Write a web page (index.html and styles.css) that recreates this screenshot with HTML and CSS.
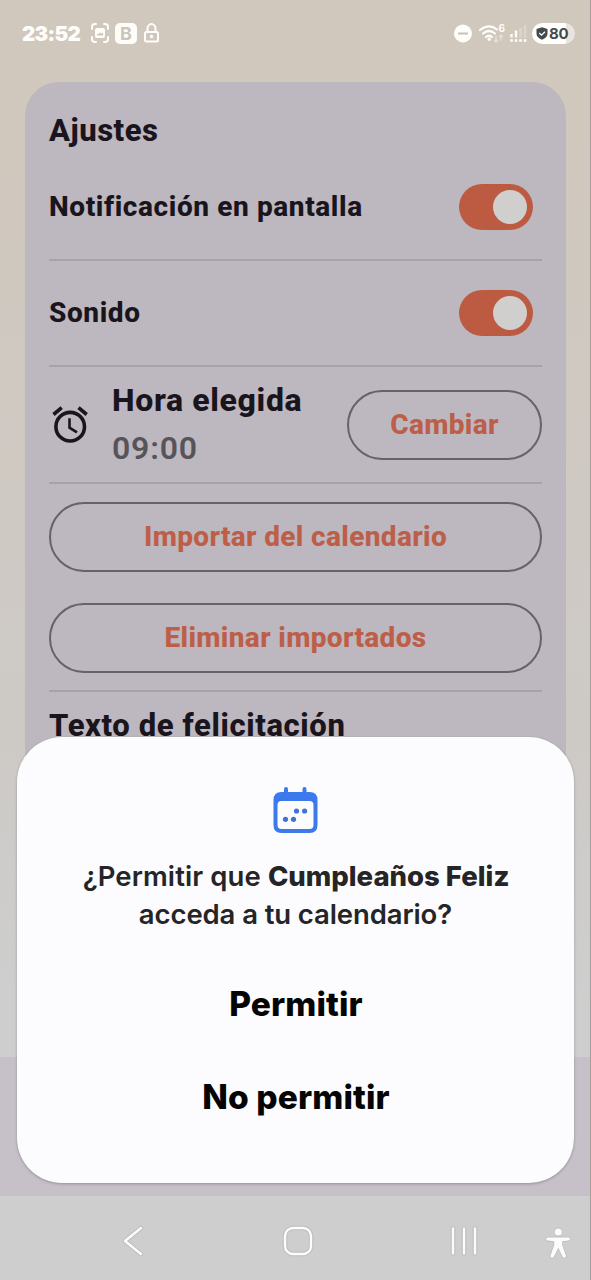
FILE: index.html
```html
<!DOCTYPE html>
<html lang="es">
<head>
<meta charset="utf-8">
<title>Ajustes</title>
<link rel="stylesheet" href="styles.css">
</head>
<body>
<div class="screen">
  <header class="status">
    <span class="clock">23:52</span>
    <svg class="status-left" width="72" height="26" viewBox="0 0 72 26">
      <g fill="none" stroke="#fffdfa" stroke-width="2" stroke-linecap="round">
        <path d="M2 9V7q0-3 3-3h1M14 4h1q3 0 3 3v2M18 17v2q0 3-3 3h-1M6 22H5q-3 0-3-3v-2"/>
        <path d="M57.500 12V8.500a4 4.500 0 0 1 8 0V12"/>
        <rect x="55" y="12" width="13" height="9.500" rx="1.500"/>
      </g>
      <path fill="#fffdfa" fill-rule="evenodd" d="M7 8h6q2 0 2 2v6q0 2-2 2H7q-2 0-2-2v-6q0-2 2-2zM7 15.500h6v-3l-2 1-1-1-1.500 1.500-1.500 0z"/>
      <rect x="25" y="3" width="22" height="21" rx="5" fill="#fffdfa"/>
      <text class="badge-letter" x="36" y="20" text-anchor="middle">B</text>
      <circle cx="61.500" cy="16.500" r="1.700" fill="#fffdfa"/>
    </svg>
    <svg class="status-right" width="76" height="26" viewBox="0 0 76 26">
      <circle cx="9" cy="13.500" r="9" fill="#fffdfa"/>
      <path d="M4 13.500h10" stroke="#c9c1b6" stroke-width="2"/>
      <g fill="none" stroke="#fffdfa" stroke-width="2.200" stroke-linecap="round">
        <path d="M26 10q9-7 17-.5M29 13.500q6-5 12 0M32 17q3.200-2.500 6 0"/>
      </g>
      <circle cx="35.200" cy="19.300" r="1.700" fill="#fffdfa"/>
      <text class="wifi-six" x="44.500" y="11.500">6</text>
      <path d="M42 16v6m-2-2 2 2 2-2M47 21v-6m-2 2 2-2 2 2" stroke="#e6e0d8" stroke-width="1.300" fill="none"/>
      <path d="M57.500 14v3.500M62 10.500v7" stroke="#fffdfa" stroke-width="2.400"/>
      <path d="M66.500 8v9.500M71 5v12.500" stroke="#dcd5cb" stroke-width="2.400"/>
      <path d="M56.300 20.500h2.600M60.700 20.500h2.600M65.200 20.500h2.600M69.700 20.500h2.600" stroke="#fffdfa" stroke-width="2.600"/>
    </svg>
    <span class="battery">
      <svg width="12" height="13" viewBox="0 0 12 13"><path d="M6 .3 11.500 2v4.500q0 4-5.500 6.200Q.5 10.500.5 6.500V2z" fill="#444b4e"/><path d="m3.300 6 2.200 2.200L9 4.800" fill="none" stroke="#fff" stroke-width="1.300"/></svg>
      <span>80</span>
    </span>
  </header>

  <main class="card">
    <h1 class="title">Ajustes</h1>
    <div class="row row-first"><span class="label notif">Notificación en pantalla</span><span class="toggle"></span></div>
    <div class="row row-second"><span class="label sound">Sonido</span><span class="toggle"></span></div>
    <div class="row row-time">
      <svg class="alarm" width="36" height="38" viewBox="0 0 36 38" fill="none" stroke="#1a151c">
        <circle cx="18.200" cy="20.700" r="14.300" stroke-width="3.600"/>
        <path d="M1.500 8.500 9.700 1.700M26.500 1.700l8.200 6.800" stroke-width="3.600"/>
        <path d="M17.500 12.200v9.500l7.500 4.600" stroke-width="2.600"/>
      </svg>
      <div class="time"><span class="time-label">Hora elegida</span><span class="time-value">09:00</span></div>
      <button class="pill change">Cambiar</button>
    </div>
    <div class="actions">
      <button class="pill import">Importar del calendario</button>
      <button class="pill delete">Eliminar importados</button>
    </div>
    <h2 class="subtitle">Texto de felicitación</h2>
  </main>
  <div class="bottom-strip"></div>

  <nav class="nav">
    <svg width="591" height="84" viewBox="0 0 591 84">
      <g class="nav-halo">
        <path d="M141 32 125 45l16 13"/>
        <rect x="285" y="32" width="26" height="26" rx="8"/>
        <path d="M453 32.500v25M464 32.500v25M475 32.500v25"/>
      </g>
      <g class="nav-lines">
        <path d="M141 32 125 45l16 13"/>
        <rect x="285" y="32" width="26" height="26" rx="8"/>
        <path d="M453 32.500v25M464 32.500v25M475 32.500v25"/>
      </g>
      <g class="person">
        <circle cx="558.300" cy="36" r="3.600"/>
        <path d="M548 41.500h20.500q1.700 0 1.700 1.500t-1.700 1.600l-6.300.6v4l3.800 10.500q.3 1.600-1.200 2.100-1.500.3-2.200-1.100l-4.300-9-4.500 9q-.7 1.400-2.200 1.100-1.500-.5-1.200-2.100l3.800-10.500v-4l-6.400-.6q-1.700-.1-1.700-1.600T548 41.500z"/>
      </g>
    </svg>
  </nav>

  <section class="dialog">
    <svg class="calendar" width="46" height="48" viewBox="0 0 46 48">
      <path d="M13 3v7M31.500 3v7" stroke="#3b79ec" stroke-width="4" stroke-linecap="round"/>
      <path fill="#3b79ec" fill-rule="evenodd" d="M8.500 6h28q8 0 8 8v25q0 8-8 8h-28q-8 0-8-8V14q0-8 8-8zM8.500 15q-4 0-4 4v20q0 4 4 4h28q4 0 4-4V19q0-4-4-4z"/>
      <g fill="#3d74d8"><circle cx="12.500" cy="33.300" r="2.600"/><circle cx="20.500" cy="33.300" r="2.600"/><circle cx="23.500" cy="25" r="2.600"/><circle cx="31.600" cy="25" r="2.600"/></g>
    </svg>
    <p class="question"><span class="q1">¿Permitir que <b>Cumpleaños Feliz</b></span><span class="q2">acceda a tu calendario?</span></p>
    <button class="choice allow">Permitir</button>
    <button class="choice deny">No permitir</button>
  </section>
</div>
</body>
</html>
```
FILE: styles.css
```css
* { box-sizing: border-box; }
body { margin: 0; }
button { border: 0; background: none; padding: 0; }

.screen {
  position: relative;
  width: 591px;
  height: 1280px;
  overflow: hidden;
  display: flex;
  flex-direction: column;
  background: linear-gradient(#d1c8bd 0, #d0c8be 200px, #cfc9c3 480px, #cdcac6 740px, #cecece 1000px);
  border-right: 1px solid #a29e9a;
  font-family: Roboto, sans-serif;
  color: #1a151c;
}

.status {
  height: 82px;
  padding: 20px 16px 0 22px;
  display: flex;
  align-items: flex-start;
}
.clock {
  width: 68px;
  font: 900 20.500px/27px Inter, sans-serif;
  letter-spacing: -0.7px;
  color: #fffdfa;
}
.badge-letter { font: 700 18px Inter, sans-serif; fill: #cdc4b9; }
.wifi-six { font: 700 10px Inter, sans-serif; fill: #fffdfa; }
.status-right { margin-left: auto; margin-right: 2px; }
.battery {
  display: flex;
  align-items: center;
  gap: 1px;
  width: 43px;
  height: 21px;
  margin-top: 3px;
  margin-right: -1px;
  padding-left: 4px;
  border-radius: 11px;
  background: linear-gradient(90deg, #fffefb 80%, #e9e4de 80%);
  font: 700 15px/21px Inter, sans-serif;
  letter-spacing: -0.3px;
  color: #444b4e;
}

.card {
  width: 541px;
  height: 975px;
  flex: none;
  margin-left: 25px;
  padding: 31px 24px 0;
  border-radius: 34px 34px 0 0;
  background: #bdb7bf;
}
.title { margin: 0 0 5px; font-size: 31px; line-height: 36px; font-weight: 800; letter-spacing: 0.5px; }
.row { display: flex; align-items: center; border-bottom: 2px solid #a7a1a9; }
.row-first { height: 107px; }
.row-second { height: 106px; }
.row-time { height: 117px; }
.label { font-size: 28px; font-weight: 800; line-height: 32px; letter-spacing: 0.6px; }
.toggle {
  display: flex;
  justify-content: flex-end;
  align-items: center;
  width: 74px;
  height: 46px;
  margin: 0 9px 0 auto;
  padding-right: 6px;
  border-radius: 23px;
  background: #bd5b42;
}
.toggle::before { content: ""; width: 34px; height: 34px; border-radius: 50%; background: #d0cfcd; }

.alarm { margin-left: 3px; }
.time { display: flex; flex-direction: column; margin-left: 24px; }
.time-label, .time-value { font-size: 32px; line-height: 47px; font-weight: 800; letter-spacing: 0.65px; }
.time-label { margin-top: -1px; }
.time-value { padding-top: 1px; margin-bottom: -1px; font-weight: 650; letter-spacing: 0.8px; color: #565459; }
.pill {
  height: 70px;
  border: 2px solid #67616a;
  border-radius: 35px;
  font: 800 28px/32px Roboto, sans-serif;
  letter-spacing: 0.35px;
  color: #bd5f48;
}
.change { width: 195px; margin-left: auto; padding-top: 1px; }
.actions {
  display: flex;
  flex-direction: column;
  gap: 31px;
  height: 208px;
  padding-top: 18px;
  border-bottom: 2px solid #a7a1a9;
}
.subtitle { margin: 16px 0 0; font-size: 31px; line-height: 36px; font-weight: 800; letter-spacing: 0.62px; }

.bottom-strip { height: 139px; flex: none; background: #c6c0c9; }
.nav { height: 84px; background: #cecece; }
.nav svg { display: block; }
.nav g { fill: none; stroke-linecap: round; stroke-linejoin: round; }
.nav-halo { stroke: #bdbdbd; stroke-width: 4.500; }
.nav-lines { stroke: #fcfcfc; stroke-width: 2.400; }
.nav .person { fill: #fcfcfc; stroke: #bdbdbd; stroke-width: 1.600; paint-order: stroke; }

.dialog {
  position: absolute;
  left: 17px;
  top: 737px;
  width: 557px;
  height: 446px;
  padding-top: 49px;
  border-radius: 45px;
  background: #fcfcfe;
  box-shadow: 0 1px 3px rgba(0, 0, 0, 0.25);
  display: flex;
  flex-direction: column;
  align-items: center;
  font-family: Inter, sans-serif;
}
.question {
  display: flex;
  flex-direction: column;
  align-items: center;
  margin: 24px 0 0;
  font-size: 27.500px;
  line-height: 37.500px;
  font-weight: 600;
  letter-spacing: -0.1px;
  color: #252528;
  white-space: nowrap;
}
.q1 { padding-left: 1px; letter-spacing: 0.1px; }
.question b { font-weight: 800; letter-spacing: 0; }
.choice { font: 800 33.500px/40px Inter, sans-serif; letter-spacing: 0.1px; padding-left: 1px; color: #050505; }
.allow { margin-top: 51px; }
.deny { margin-top: 53px; }
```
